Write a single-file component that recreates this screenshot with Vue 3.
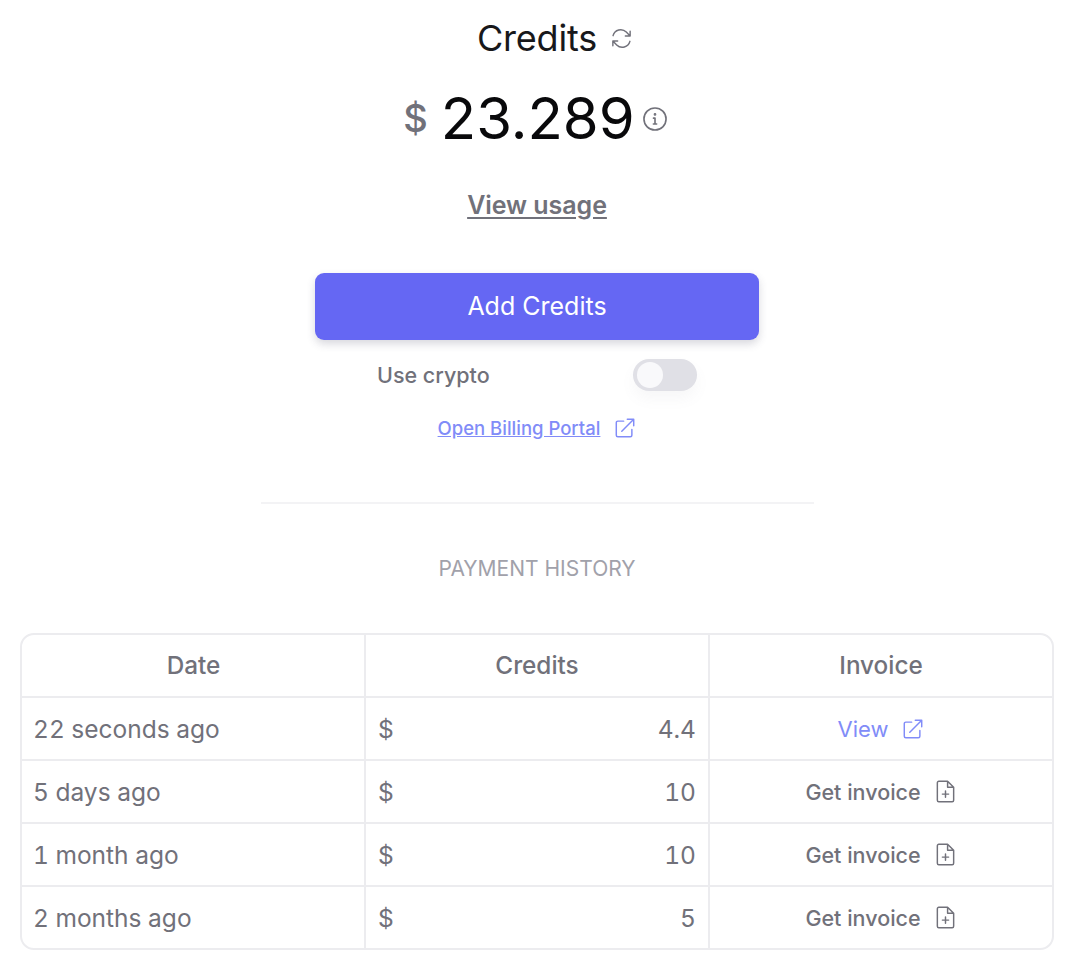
<script setup>
const rows = [
  { date: '22 seconds ago', amount: '4.4', link: true },
  { date: '5 days ago', amount: '10' },
  { date: '1 month ago', amount: '10' },
  { date: '2 months ago', amount: '5' }
]
</script>

<template>
  <main class="page">
    <section class="summary">
      <h1 class="title">
        <span>Credits</span>
        <svg class="refresh" viewBox="0 0 24 24" fill="none" stroke="currentColor" stroke-width="1.5" stroke-linecap="round" stroke-linejoin="round">
          <path d="M16.02 9.35h4.99V4.36M2.99 19.64v-4.99h4.99M3.2 9.03a8.25 8.25 0 0 1 13.8-3.7l4 4.02M3 14.65l3.98 4.02a8.25 8.25 0 0 0 13.8-3.7" />
        </svg>
      </h1>
      <div class="balance">
        <span class="currency">$</span>
        <span class="amount">23.289</span>
        <svg class="info" viewBox="0 0 24 24" fill="none" stroke="currentColor" stroke-width="1.5" stroke-linecap="round" stroke-linejoin="round">
          <circle cx="12" cy="12" r="10.2" />
          <path d="M10.6 11.2H12v5.4M10.5 16.6h3" />
          <circle cx="12" cy="7.8" r=".5" fill="currentColor" />
        </svg>
      </div>
      <a class="usage">View usage</a>
      <button class="add">Add Credits</button>
      <div class="crypto">
        <span>Use crypto</span>
        <span class="toggle"><span class="knob"></span></span>
      </div>
      <div class="portal">
        <a>Open Billing Portal</a>
        <svg class="ext" viewBox="0 0 24 24" fill="none" stroke="currentColor" stroke-width="1.6" stroke-linecap="round" stroke-linejoin="round">
          <path d="M10.5 4.5H4.2A1.7 1.7 0 0 0 2.5 6.2v13.6c0 .9.8 1.7 1.7 1.7h13.6c.9 0 1.7-.8 1.7-1.7v-6.3M8.5 15.5 21.5 2.5M14.5 2.5h7v7" />
        </svg>
      </div>
      <hr class="divider" />
      <h2 class="history">Payment history</h2>
    </section>

    <div class="table">
      <div class="row head">
        <div class="cell center">Date</div>
        <div class="cell center">Credits</div>
        <div class="cell center">Invoice</div>
      </div>
      <div v-for="r in rows" :key="r.date" class="row">
        <div class="cell">{{ r.date }}</div>
        <div class="cell between"><span>$</span><span>{{ r.amount }}</span></div>
        <div class="cell center">
          <span v-if="r.link" class="view">
            View
            <svg class="ext" viewBox="0 0 24 24" fill="none" stroke="currentColor" stroke-width="1.6" stroke-linecap="round" stroke-linejoin="round">
              <path d="M10.5 4.5H4.2A1.7 1.7 0 0 0 2.5 6.2v13.6c0 .9.8 1.7 1.7 1.7h13.6c.9 0 1.7-.8 1.7-1.7v-6.3M8.5 15.5 21.5 2.5M14.5 2.5h7v7" />
            </svg>
          </span>
          <span v-else class="get">
            Get invoice
            <svg class="doc" viewBox="0 0 18 22" fill="none" stroke="currentColor" stroke-width="1.4" stroke-linecap="round" stroke-linejoin="round">
              <path d="M11 1.2H2.6C1.8 1.2 1.2 1.8 1.2 2.6v16.8c0 .8.6 1.4 1.4 1.4h12.8c.8 0 1.4-.6 1.4-1.4V7L11 1.2ZM11 1.2V7h5.8M9 10.5v6M6 13.5h6" />
            </svg>
          </span>
        </div>
      </div>
    </div>
  </main>
</template>

<style scoped>
.page {
  width: 1074px;
  box-sizing: border-box;
  padding: 0 20px;
  font-family: Inter, "Liberation Sans", sans-serif;
  color: #71717a;
}
.summary {
  display: flex;
  flex-direction: column;
  align-items: center;
}
.title {
  position: relative;
  margin: 14px 0 0;
  height: 48px;
  display: flex;
  align-items: center;
  font-size: 36px;
  font-weight: 400;
  color: #18181b;
  letter-spacing: -0.2px;
}
.refresh {
  position: absolute;
  left: calc(100% + 13px);
  top: 13px;
  width: 23px;
  height: 23px;
  color: #71717a;
}
.balance {
  margin: 14px 0 0 -3px;
  height: 84px;
  display: flex;
  align-items: center;
}
.currency {
  font-size: 38px;
  font-weight: 500;
  margin-right: 13px;
}
.amount {
  font-size: 58px;
  color: #09090b;
  margin-right: 7px;
}
.info {
  width: 26px;
  height: 26px;
  margin-top: 2px;
}
.usage {
  margin-top: 30px;
  font-size: 25px;
  font-weight: 600;
  line-height: 30px;
  text-decoration: underline;
  text-underline-offset: 3px;
  letter-spacing: -0.05px;
}
.add {
  margin-top: 53px;
  width: 444px;
  height: 67px;
  padding: 0 0 2px;
  border: 0;
  border-radius: 9px;
  background: #6567f3;
  color: #fff;
  font: 400 25px Inter, "Liberation Sans", sans-serif;
  box-shadow: 0 4px 8px rgba(60, 60, 90, 0.2);
}
.crypto {
  margin-top: 19px;
  width: 320px;
  height: 32px;
  display: flex;
  align-items: center;
  justify-content: space-between;
  font-size: 21.5px;
  font-weight: 500;
}
.toggle {
  width: 64px;
  height: 32px;
  border-radius: 16px;
  background: #e0e0e6;
  display: flex;
  align-items: center;
  padding-left: 4px;
  box-sizing: border-box;
  box-shadow: 0 8px 14px rgba(120, 120, 140, 0.06);
}
.knob {
  width: 26px;
  height: 26px;
  border-radius: 50%;
  background: #f9f9fb;
}
.portal {
  margin-top: 23px;
  display: flex;
  align-items: center;
  gap: 14px;
  color: #818cf8;
  font-size: 18.5px;
  font-weight: 500;
  line-height: 28px;
}
.portal a {
  text-decoration: underline;
}
.ext {
  width: 22px;
  height: 22px;
}
.divider {
  margin: 60px 0 0;
  width: 553px;
  border: 0;
  height: 2px;
  background: #f3f3f5;
}
.history {
  margin: 51px 0 0;
  font-size: 21px;
  font-weight: 400;
  line-height: 28px;
  text-transform: uppercase;
  color: #a1a1aa;
}
.table {
  margin-top: 50px;
  border: 2px solid #ececef;
  border-radius: 14px;
  overflow: hidden;
  width: 1034px;
  box-sizing: border-box;
  font-variant-numeric: tabular-nums;
}
.row {
  display: grid;
  grid-template-columns: 342px 344px 1fr;
  height: 63px;
  box-sizing: border-box;
  border-top: 2px solid #ececef;
  font-size: 24.5px;
}
.row.head {
  border-top: 0;
  height: 61px;
  font-size: 24.3px;
  font-weight: 500;
}
.row.head .cell {
  padding-bottom: 2px;
}
.cell {
  display: flex;
  align-items: center;
  padding: 0 12px;
  border-left: 2px solid #ececef;
}
.cell:first-child {
  border-left: 0;
  padding-left: 12px;
  padding-right: 10px;
  margin-left: -1px;
}
.center {
  justify-content: center;
}
.between {
  justify-content: space-between;
}
.view,
.get {
  display: inline-flex;
  align-items: center;
}
.view {
  color: #818cf8;
  font-size: 22px;
  gap: 14px;
}
.get {
  font-size: 21.5px;
  font-weight: 500;
  gap: 15px;
  margin-left: -2px;
}
.doc {
  width: 19px;
  height: 23px;
}
</style>
